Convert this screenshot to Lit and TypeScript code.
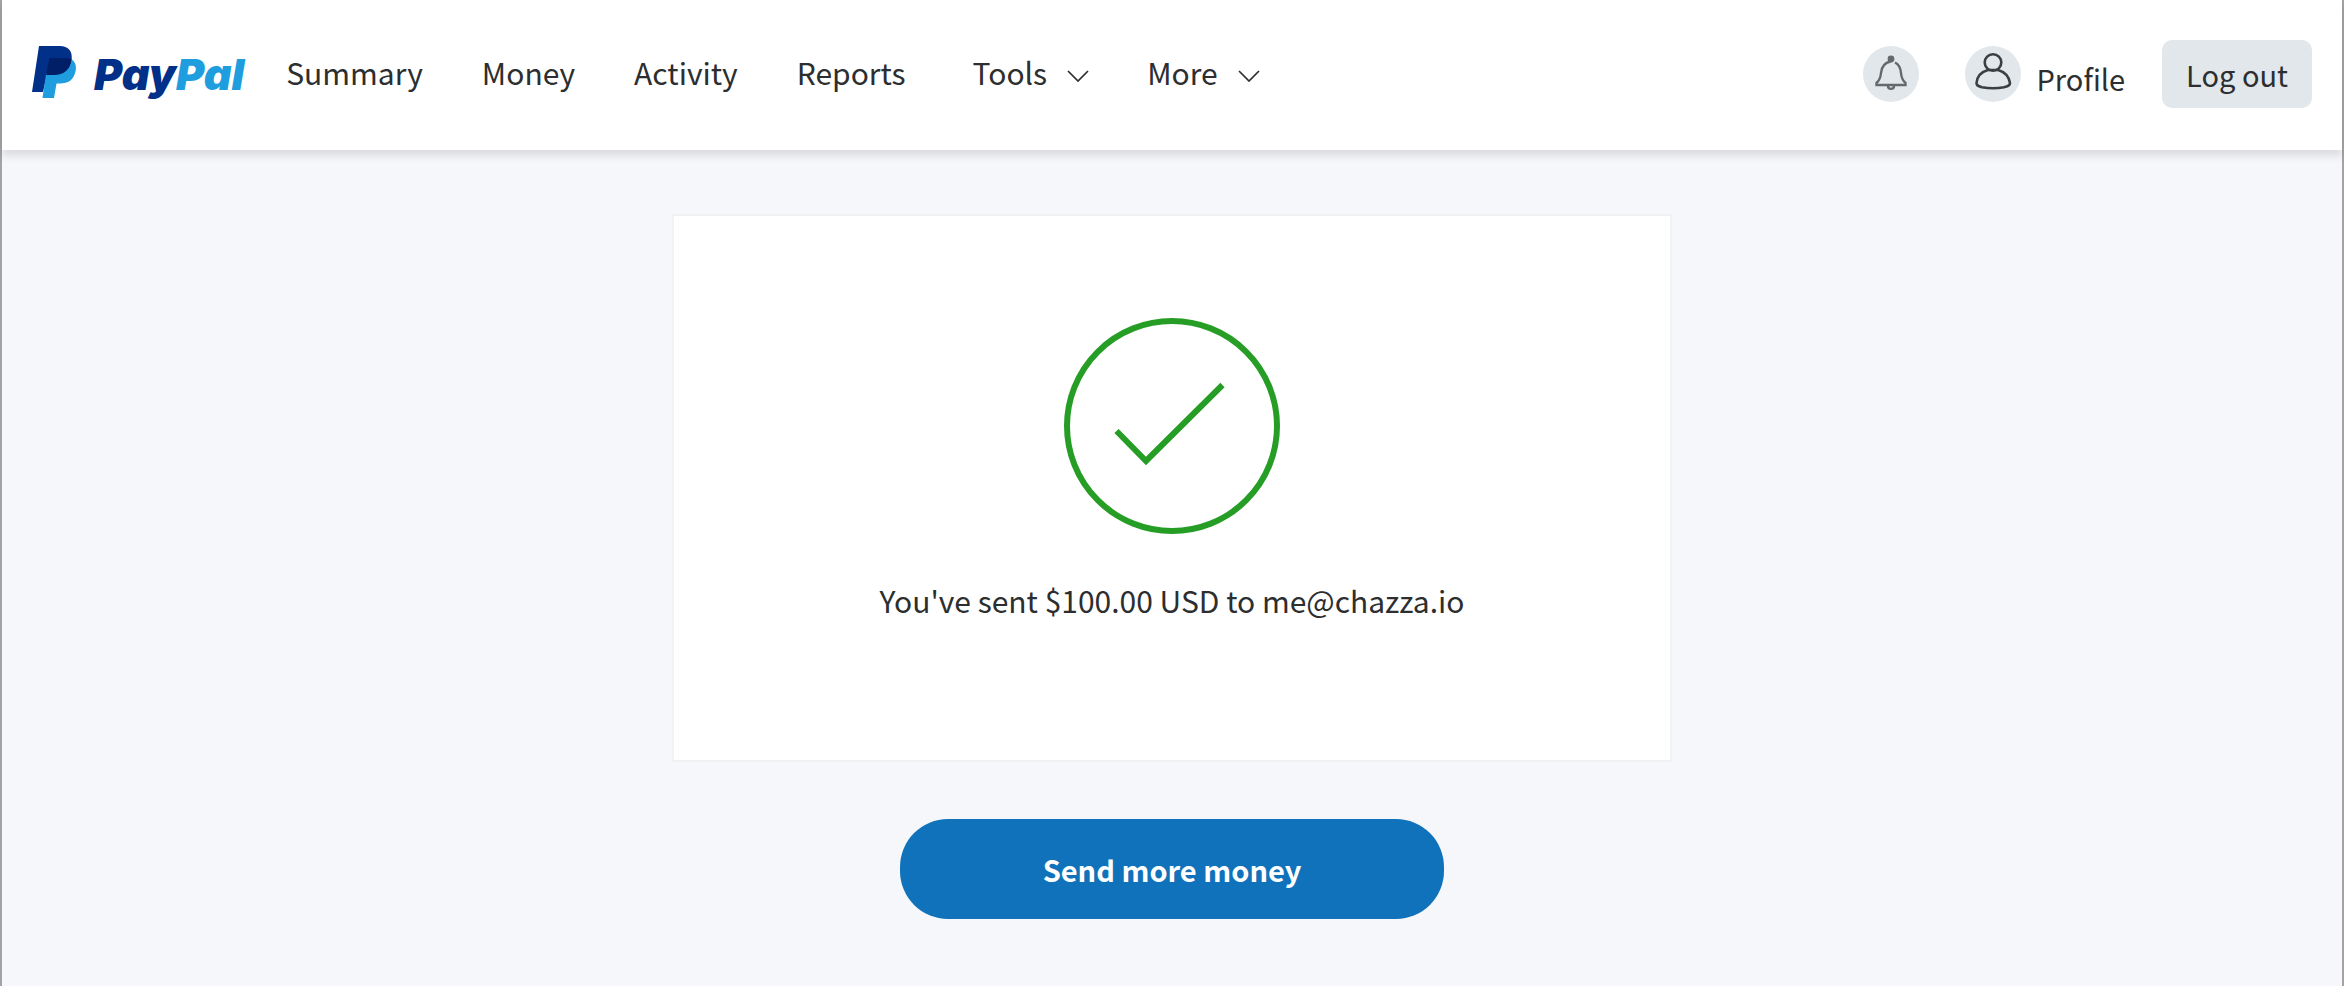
import { LitElement, html, css, svg } from "lit";
import { customElement } from "lit/decorators.js";

const chevron = html`<svg class="chevron" viewBox="0 0 22 12" aria-hidden="true">
  <path d="M1 1 L11 11 L21 1" fill="none" stroke="currentColor" stroke-width="1.700" />
</svg>`;

const monogram = svg`
  <path fill="#003087" d="M7 0H28C36 0 40.500 5 39.700 13C38.500 23.500 32 29 22 29H15L11 46H0Z" />
  <path fill="#1e9edf" d="M39.700 13.500C43.500 16 44.600 20.500 43.600 25C41.800 34 36 37.500 28 37.500H24.500L22 52H10.500L14.200 27H22C32 28 38.500 23 39.700 13.500Z" />
  <path fill="#001f66" d="M17.500 12H33C36 12 38.500 12.500 39.700 13.500C38.300 23.500 32 29 22 29H14Z" />`;

@customElement("app-root")
export class AppRoot extends LitElement {
  static styles = css`
    :host {
      display: block;
      font-family: "Noto Sans CJK SC", "Open Sans", sans-serif;
      font-size: 29px;
      line-height: 40px;
      color: #2c2e2f;
    }
    * { box-sizing: border-box; }
    .page {
      min-height: 100vh;
      background: #f5f7fa;
      border: solid #a3a3a5;
      border-width: 0 2px;
    }
    .header {
      display: flex;
      align-items: flex-start;
      justify-content: space-between;
      height: 150px;
      padding: 40px 30px 0;
      background: #fff;
      box-shadow: 0 6px 8px rgba(0, 0, 0, 0.11);
    }
    a { color: inherit; text-decoration: none; }
    button { font: inherit; color: inherit; border: 0; padding: 0; background: none; cursor: pointer; }
    .left, .nav, .account, .logo, .menu, .profile { display: flex; align-items: center; }
    .left { gap: 42px; padding-top: 6px; }
    .logo { gap: 18px; height: 52px; }
    .monogram { width: 44px; height: 52px; overflow: visible; }
    .word {
      padding-top: 4px;
      font-family: Inter, "Open Sans", sans-serif;
      font-size: 43px;
      font-style: italic;
      font-weight: 900;
      color: #003087;
    }
    .word .light { color: #1e9edf; }
    .nav { gap: 59px; font-size: 30px; }
    .menus { display: flex; gap: 58px; padding-left: 8px; }
    .menu { gap: 20px; }
    .chevron { width: 22px; height: 12px; margin-top: 8px; }
    .round {
      display: grid;
      place-items: center;
      width: 56px;
      height: 56px;
      border-radius: 50%;
      background: #e1e7eb;
    }
    .round svg { width: 56px; height: 56px; }
    .bell { margin-right: 46px; }
    .profile { gap: 16px; margin-right: 37px; }
    .name { padding-top: 8px; }
    .logout {
      height: 68px;
      padding: 0 24px;
      border-radius: 10px;
      background: #e1e7eb;
    }
    .main {
      display: flex;
      flex-direction: column;
      align-items: center;
      gap: 57px;
      padding-top: 64px;
    }
    .card {
      display: flex;
      flex-direction: column;
      align-items: center;
      gap: 46px;
      width: 1000px;
      max-width: 100%;
      padding: 102px 40px 140px;
      background: #fff;
      border: 2px solid #f1f2f2;
    }
    .check { width: 216px; height: 216px; }
    .message { margin: 0; font-size: 30px; }
    .send {
      width: 544px;
      max-width: 100%;
      height: 100px;
      border-radius: 48px;
      background: #1072ba;
      color: #fff;
      font-weight: 700;
    }
  `;

  render() {
    return html`
      <div class="page">
        <header class="header">
          <div class="left">
            <a class="logo" href="#" aria-label="PayPal">
              <svg class="monogram" viewBox="0 0 44 52" aria-hidden="true">${monogram}</svg>
              <span class="word">Pay<span class="light">Pal</span></span>
            </a>
            <nav class="nav">
              <a href="#">Summary</a>
              <a href="#">Money</a>
              <a href="#">Activity</a>
              <a href="#">Reports</a>
              <div class="menus">
                <button class="menu" type="button">Tools ${chevron}</button>
                <button class="menu" type="button">More ${chevron}</button>
              </div>
            </nav>
          </div>
          <div class="account">
            <button class="round bell" type="button" aria-label="Notifications">
              <svg viewBox="0 0 56 56" fill="none" stroke="#66696c" stroke-width="2.400" aria-hidden="true">
                <circle cx="28" cy="13" r="2.200" fill="#66696c" />
                <path d="M27.500 15.500C20.500 17 18.500 21 18 27C17.600 32 16.500 34.500 13.500 37V39H42.500V37C39.500 34.500 38.400 32 38 27C37.500 21 36 18.500 32 16.500" />
                <path d="M25 40C25 43.800 31 43.800 31 40" />
              </svg>
            </button>
            <a class="profile" href="#">
              <span class="round">
                <svg viewBox="0 0 56 56" fill="none" stroke="#3c3f41" stroke-width="2.600" aria-hidden="true">
                  <circle cx="28" cy="16.500" r="8.300" />
                  <path d="M23 24C16 26 12 31 11.500 37C11.300 40 14 40.500 17 41.200C24 42.500 32 42.500 39 41.200C42 40.500 45.200 40 45 37C44 31 40 26 33 24Z" />
                </svg>
              </span>
              <span class="name">Profile</span>
            </a>
            <button class="logout" type="button">Log out</button>
          </div>
        </header>
        <main class="main">
          <section class="card">
            <svg class="check" viewBox="0 0 216 216" fill="none" stroke="#269e26" stroke-width="6" aria-hidden="true">
              <circle cx="108" cy="108" r="105" />
              <path d="M52.500 113L82 143L158.500 67" />
            </svg>
            <p class="message">You've sent $100.00 USD to me@chazza.io</p>
          </section>
          <button class="send" type="button">Send more money</button>
        </main>
      </div>
    `;
  }
}
